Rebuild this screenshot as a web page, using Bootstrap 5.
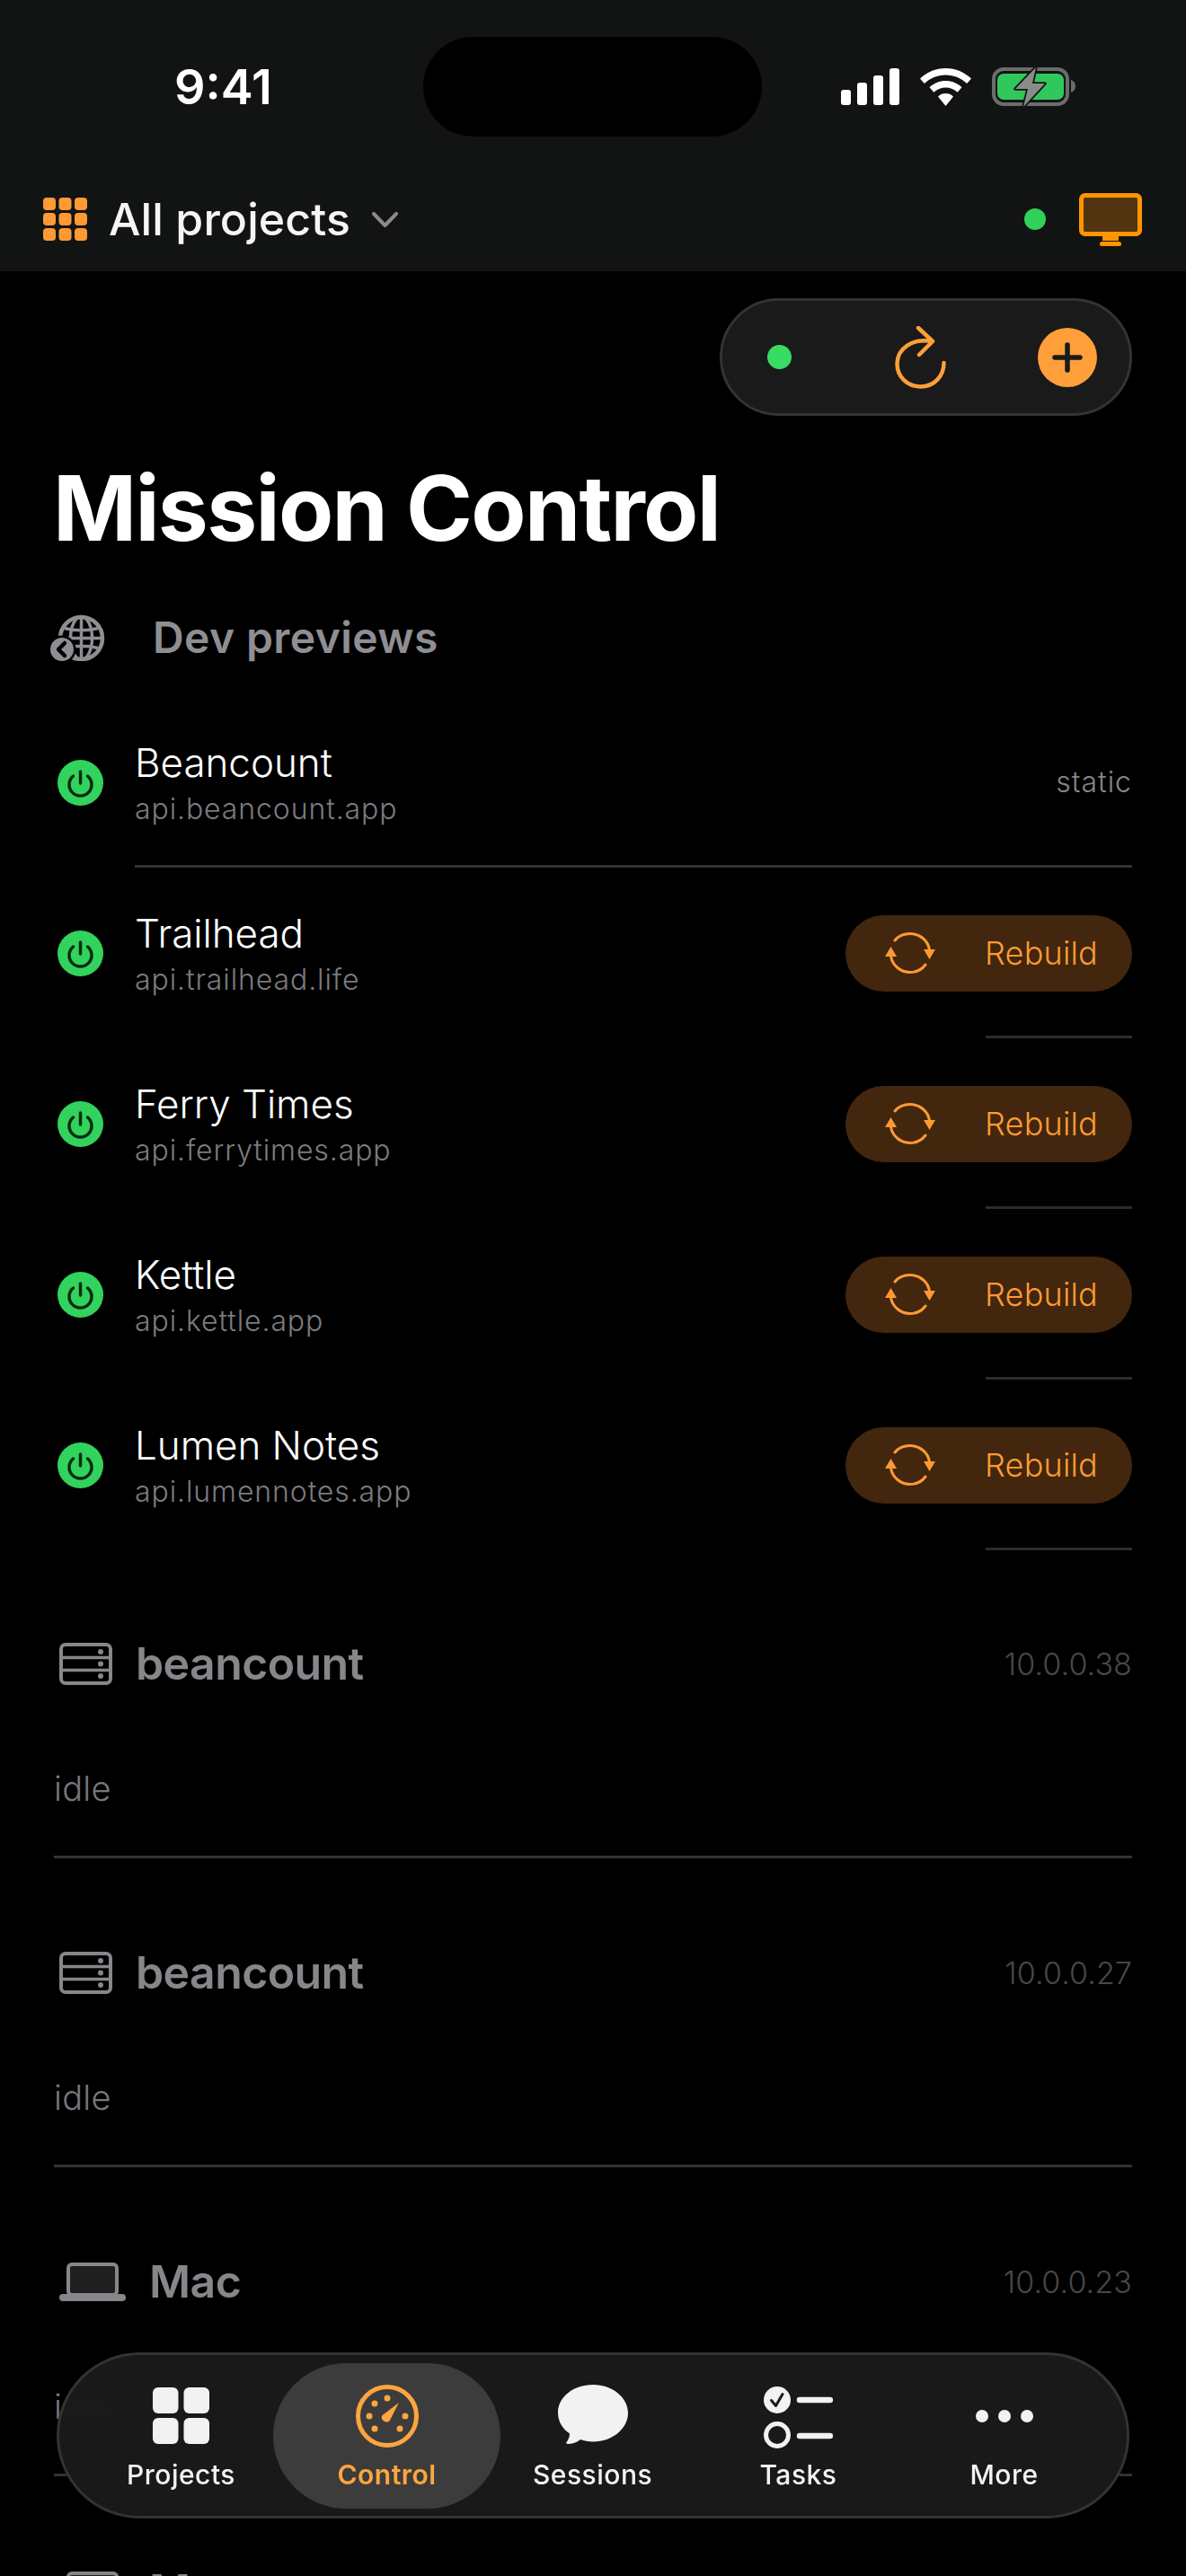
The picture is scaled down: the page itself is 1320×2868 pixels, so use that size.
<!DOCTYPE html>
<html lang="en">
<head>
<meta charset="utf-8">
<title>Mission Control</title>
<link rel="stylesheet" href="https://cdn.jsdelivr.net/npm/bootstrap@5.3.3/dist/css/bootstrap.min.css">
<style>
html, body { height: 2868px; overflow: hidden; background: #000; }
body { font-family: Inter, "Liberation Sans", sans-serif; color: #fff; position: relative; }

.top-bar { background: #121414; height: 302px; }
.status-row { height: 152px; padding-top: 41px; }
.clock-side { width: 471px; padding-left: 26px; font-size: 54px; font-weight: 600; line-height: 111px; text-align: center; }
.notch { width: 377px; height: 111px; background: #000; border-radius: 56px; }
.status-side { padding-left: 88px; gap: 23px; height: 111px; }
.project-row { height: 64px; margin-top: 60px; padding: 0 49px 0 48px; }
.project-name { font-size: 50px; font-weight: 500; margin-left: 24px; color: #f5f5f5; letter-spacing: .1px; }
.project-chevron { margin-left: 24px; }
.live-dot { background: #30d158; border-radius: 50%; }
.live-top { width: 24px; height: 24px; margin-right: 37px; }

.action-pill { width: 459px; height: 131px; margin: 30px 60px 0 auto; padding: 0 36px 0 50px; background: #1a1a1a; border: 3px solid #333; border-radius: 66px; }
.live-action { width: 27px; height: 27px; background: #39dc63; }
.reload-icon { margin-left: 115px; }
.plus-icon { margin-left: 102px; }

.page-title { font-size: 100px; font-weight: 700; line-height: 120px; margin: 43px 0 0 59px; letter-spacing: -1.7px; }
.previews-head { height: 80px; margin: 44px 0 26px 56px; }
.previews-title { font-size: 48px; font-weight: 600; color: #8e8e93; margin-left: 53px; letter-spacing: .4px; }

.preview-row { height: 187px; padding: 3px 60px 0 64px; }
.power-dot { width: 51px; height: 51px; margin-right: 35px; flex: none; }
.preview-text { padding-top: 8px; }
.preview-name { font-size: 44px; line-height: 52px; color: #fff; font-weight: 300; letter-spacing: -.05px; }
.preview-host { font-size: 32px; line-height: 52px; color: #7b7b80; letter-spacing: .9px; font-weight: 300; }
.static-tag { font-size: 32px; color: #87878c; letter-spacing: 1px; font-weight: 300; }
.rebuild-btn { width: 319px; height: 85px; border: 0; border-radius: 43px; background: #42260e; color: #ff9a33; font-size: 36px; font-weight: 300; padding: 0 38px 0 44px; letter-spacing: .2px; }
.rebuild-btn:hover { background: #42260e; color: #ff9a33; }
.rule-line { height: 3px; background: #333; margin-right: 60px; }
.rule-long { margin-left: 150px; }
.rule-short { margin-left: 1097px; background: #2c2c2e; }

.machine { padding: 87px 60px 0; }
.machine-list { margin-top: -1px; }
.machine-head { height: 80px; }
.machine-name { font-size: 50px; font-weight: 600; color: #86868b; margin-left: 26px; letter-spacing: -.6px; }
.machine-icon { margin-left: 6px; }
.machine-ip { font-size: 34px; color: #484848; font-weight: 300; letter-spacing: .1px; }
.machine-state { font-size: 38px; line-height: 60px; color: #77777c; margin-top: 69px; font-weight: 300; letter-spacing: .3px; }
.machine-rule { height: 3px; background: #333; margin-top: 45px; }

.tab-bar { position: absolute; left: 63px; top: 2619px; width: 1194px; height: 185px; padding: 0 21px; background: rgba(27,27,27,.94); backdrop-filter: blur(7px); border: 3px solid #333; border-radius: 93px; }
.tab-item { flex: 0 0 229px; height: 162px; border-radius: 81px; color: #f2f2f2; font-size: 30px; font-weight: 500; line-height: 36px; padding-top: 22px; letter-spacing: .5px; }
.tab-item svg { display: block; height: 74px; margin-bottom: 10px; }
.tab-on { flex-basis: 253px; margin: 0 -12px; background: #3c3c3c; color: #ffa53f; font-weight: 600; }
</style>
</head>
<body>

<div class="top-bar">
    <div class="status-row d-flex">
        <div class="clock-side">9:41</div>
        <div class="notch"></div>
        <div class="status-side d-flex align-items-center">
            <svg width="65" height="41" viewBox="0 0 65 41" fill="#fff"><rect x="0" y="24" width="11" height="17" rx="3"/><rect x="18" y="16" width="11" height="25" rx="3"/><rect x="36" y="8" width="11" height="33" rx="3"/><rect x="54" y="0" width="11" height="41" rx="3"/></svg>
            <svg width="57" height="42" viewBox="0 0 57 42" fill="#fff"><path d="M28.500 0C17.500 0 7.500 4.300 0 11.500L4.800 17C11 11 19.300 7.400 28.500 7.400S46 11 52.200 17L57 11.500C49.500 4.300 39.500 0 28.500 0Z"/><path d="M28.500 14C21.500 14 15.200 16.700 10.500 21.200L15.400 26.700C18.800 23.500 23.400 21.500 28.500 21.500S38.200 23.500 41.600 26.700L46.500 21.200C41.800 16.700 35.500 14 28.500 14Z"/><path d="M28.500 28C25.200 28 22.200 29.200 20 31.400L28.500 42L37 31.400C34.800 29.200 31.800 28 28.500 28Z"/></svg>
            <svg width="93" height="44" viewBox="0 0 93 44"><rect x="2" y="2" width="82" height="39" rx="11" fill="none" stroke="#6b6d6c" stroke-width="4"/><rect x="6" y="7" width="74" height="29" rx="7" fill="#30c85a"/><path d="M88 14c3 .8 5 3.500 5 7s-2 6.200-5 7z" fill="#6b6d6c"/><path d="M49 0L26 24h14l-5 20 24-26H45z" fill="#8a8c8b" stroke="#121414" stroke-width="3.500" stroke-linejoin="round" paint-order="stroke"/></svg>
        </div>
    </div>
    <div class="project-row d-flex align-items-center">
        <svg width="49" height="48" viewBox="0 0 49 48" fill="#ff9a33">
            <rect x="0" y="0" width="14" height="14" rx="4"/><rect x="17.500" y="0" width="14" height="14" rx="4"/><rect x="35" y="0" width="14" height="14" rx="4"/>
            <rect x="0" y="17" width="14" height="14" rx="4"/><rect x="17.500" y="17" width="14" height="14" rx="4"/><rect x="35" y="17" width="14" height="14" rx="4"/>
            <rect x="0" y="34" width="14" height="14" rx="4"/><rect x="17.500" y="34" width="14" height="14" rx="4"/><rect x="35" y="34" width="14" height="14" rx="4"/>
        </svg>
        <span class="project-name">All projects</span>
        <svg class="project-chevron" width="29" height="17" viewBox="0 0 29 17" fill="none" stroke="#8a8a8a" stroke-width="4" stroke-linecap="round" stroke-linejoin="round"><path d="M2 2l12.500 13L27 2"/></svg>
        <span class="live-dot live-top ms-auto"></span>
        <svg width="70" height="59" viewBox="0 0 70 59"><rect x="2.500" y="2.500" width="65" height="43" rx="4" fill="#523410" stroke="#ff9500" stroke-width="5"/><path d="M26 47h18v6H26z" fill="#ff9500"/><rect x="23" y="54" width="24" height="5" rx="2.500" fill="#ff9500"/></svg>
    </div>
</div>

<div class="action-pill d-flex align-items-center">
    <span class="live-dot live-action"></span>
    <svg class="reload-icon" width="57" height="70" viewBox="0 0 57 70" fill="none" stroke="#ff9f3a" stroke-width="4.500" stroke-linecap="round" stroke-linejoin="round"><path d="M41 17C20 13 2.500 25 2.500 42c0 14 11 25.500 26 25.500S54.500 56 54.500 41"/><path d="M26 2l16 15-15 15"/></svg>
    <svg class="plus-icon" width="66" height="66" viewBox="0 0 66 66"><circle cx="33" cy="33" r="33" fill="#ff9f3a"/><path d="M33 19v28M19 33h28" stroke="#1a1a1a" stroke-width="5.500" stroke-linecap="round"/></svg>
</div>

<h1 class="page-title">Mission Control</h1>

<div class="previews-head d-flex align-items-center">
    <svg width="61" height="52" viewBox="0 0 61 52" fill="none">
        <g stroke="#8e8e93"><circle cx="34.500" cy="26.500" r="23.500" stroke-width="4.500"/><ellipse cx="34.500" cy="26.500" rx="12" ry="24" stroke-width="3.500"/><path d="M34.500 3v47M11 26.500h47M16 15.500c11 3 26 3 37 0M16 37.500c11-3 26-3 37 0" stroke-width="3.500"/></g>
        <circle cx="13" cy="39" r="15.500" fill="#000"/><circle cx="13" cy="39" r="13" fill="#8e8e93"/><path d="M16 32l-7 7 7 7" fill="none" stroke="#000" stroke-width="4.500" stroke-linecap="round" stroke-linejoin="round"/>
    </svg>
    <span class="previews-title">Dev previews</span>
</div>

<div class="preview-list">
    <div class="preview-row d-flex align-items-center">
        <svg class="power-dot" viewBox="0 0 51 51"><circle cx="25.500" cy="25.500" r="25.500" fill="#32d35c"/><path d="M25.500 13v13M17.500 18a12.500 12.500 0 1 0 16 0" fill="none" stroke="#0a2a12" stroke-width="3.500" stroke-linecap="round"/></svg>
        <div class="preview-text"><div class="preview-name">Beancount</div><div class="preview-host">api.beancount.app</div></div>
        <span class="static-tag ms-auto">static</span>
    </div>
    <div class="rule-line rule-long"></div>
    <div class="preview-row d-flex align-items-center">
        <svg class="power-dot" viewBox="0 0 51 51"><circle cx="25.500" cy="25.500" r="25.500" fill="#32d35c"/><path d="M25.500 13v13M17.500 18a12.500 12.500 0 1 0 16 0" fill="none" stroke="#0a2a12" stroke-width="3.500" stroke-linecap="round"/></svg>
        <div class="preview-text"><div class="preview-name">Trailhead</div><div class="preview-host">api.trailhead.life</div></div>
        <button class="btn rebuild-btn ms-auto d-flex align-items-center justify-content-between"><svg width="56" height="46" viewBox="0 0 56 46" fill="none"><g stroke="#ff9a33" stroke-width="3" stroke-linecap="round"><path d="M11 9C15 4 21 1.500 28 1.500c11 0 20 8 21.500 18"/><path d="M45 36C41 41.500 35 44.500 28 44.500c-11 0-20-8-21.500-18"/></g><path d="M43 19h13l-6.500 11zM0 27h13L6.500 16z" fill="#ff9a33"/></svg><span>Rebuild</span></button>
    </div>
    <div class="rule-line rule-short"></div>
    <div class="preview-row d-flex align-items-center">
        <svg class="power-dot" viewBox="0 0 51 51"><circle cx="25.500" cy="25.500" r="25.500" fill="#32d35c"/><path d="M25.500 13v13M17.500 18a12.500 12.500 0 1 0 16 0" fill="none" stroke="#0a2a12" stroke-width="3.500" stroke-linecap="round"/></svg>
        <div class="preview-text"><div class="preview-name">Ferry Times</div><div class="preview-host">api.ferrytimes.app</div></div>
        <button class="btn rebuild-btn ms-auto d-flex align-items-center justify-content-between"><svg width="56" height="46" viewBox="0 0 56 46" fill="none"><g stroke="#ff9a33" stroke-width="3" stroke-linecap="round"><path d="M11 9C15 4 21 1.500 28 1.500c11 0 20 8 21.500 18"/><path d="M45 36C41 41.500 35 44.500 28 44.500c-11 0-20-8-21.500-18"/></g><path d="M43 19h13l-6.500 11zM0 27h13L6.500 16z" fill="#ff9a33"/></svg><span>Rebuild</span></button>
    </div>
    <div class="rule-line rule-short"></div>
    <div class="preview-row d-flex align-items-center">
        <svg class="power-dot" viewBox="0 0 51 51"><circle cx="25.500" cy="25.500" r="25.500" fill="#32d35c"/><path d="M25.500 13v13M17.500 18a12.500 12.500 0 1 0 16 0" fill="none" stroke="#0a2a12" stroke-width="3.500" stroke-linecap="round"/></svg>
        <div class="preview-text"><div class="preview-name">Kettle</div><div class="preview-host">api.kettle.app</div></div>
        <button class="btn rebuild-btn ms-auto d-flex align-items-center justify-content-between"><svg width="56" height="46" viewBox="0 0 56 46" fill="none"><g stroke="#ff9a33" stroke-width="3" stroke-linecap="round"><path d="M11 9C15 4 21 1.500 28 1.500c11 0 20 8 21.500 18"/><path d="M45 36C41 41.500 35 44.500 28 44.500c-11 0-20-8-21.500-18"/></g><path d="M43 19h13l-6.500 11zM0 27h13L6.500 16z" fill="#ff9a33"/></svg><span>Rebuild</span></button>
    </div>
    <div class="rule-line rule-short"></div>
    <div class="preview-row d-flex align-items-center">
        <svg class="power-dot" viewBox="0 0 51 51"><circle cx="25.500" cy="25.500" r="25.500" fill="#32d35c"/><path d="M25.500 13v13M17.500 18a12.500 12.500 0 1 0 16 0" fill="none" stroke="#0a2a12" stroke-width="3.500" stroke-linecap="round"/></svg>
        <div class="preview-text"><div class="preview-name">Lumen Notes</div><div class="preview-host">api.lumennotes.app</div></div>
        <button class="btn rebuild-btn ms-auto d-flex align-items-center justify-content-between"><svg width="56" height="46" viewBox="0 0 56 46" fill="none"><g stroke="#ff9a33" stroke-width="3" stroke-linecap="round"><path d="M11 9C15 4 21 1.500 28 1.500c11 0 20 8 21.500 18"/><path d="M45 36C41 41.500 35 44.500 28 44.500c-11 0-20-8-21.500-18"/></g><path d="M43 19h13l-6.500 11zM0 27h13L6.500 16z" fill="#ff9a33"/></svg><span>Rebuild</span></button>
    </div>
    <div class="rule-line rule-short"></div>
</div>

<div class="machine-list">
    <div class="machine">
        <div class="machine-head d-flex align-items-center">
            <svg class="machine-icon" width="59" height="47" viewBox="0 0 59 47" fill="none"><rect x="2" y="2" width="55" height="43" rx="5" stroke="#86868b" stroke-width="4"/><path d="M2 16.500h55M2 30.500h55" stroke="#86868b" stroke-width="3.500"/><g fill="#86868b"><circle cx="46" cy="10" r="3"/><circle cx="46" cy="23.500" r="3"/><circle cx="46" cy="37" r="3"/></g></svg>
            <span class="machine-name">beancount</span>
            <span class="machine-ip ms-auto">10.0.0.38</span>
        </div>
        <div class="machine-state">idle</div>
        <div class="machine-rule"></div>
    </div>
    <div class="machine">
        <div class="machine-head d-flex align-items-center">
            <svg class="machine-icon" width="59" height="47" viewBox="0 0 59 47" fill="none"><rect x="2" y="2" width="55" height="43" rx="5" stroke="#86868b" stroke-width="4"/><path d="M2 16.500h55M2 30.500h55" stroke="#86868b" stroke-width="3.500"/><g fill="#86868b"><circle cx="46" cy="10" r="3"/><circle cx="46" cy="23.500" r="3"/><circle cx="46" cy="37" r="3"/></g></svg>
            <span class="machine-name">beancount</span>
            <span class="machine-ip ms-auto">10.0.0.27</span>
        </div>
        <div class="machine-state">idle</div>
        <div class="machine-rule"></div>
    </div>
    <div class="machine">
        <div class="machine-head d-flex align-items-center">
            <svg class="machine-icon" width="74" height="43" viewBox="0 0 74 43"><rect x="10" y="2" width="54" height="34" rx="4" fill="#1f1f20" stroke="#86868b" stroke-width="4"/><rect x="0" y="35" width="74" height="8" rx="4" fill="#86868b"/></svg>
            <span class="machine-name">Mac</span>
            <span class="machine-ip ms-auto">10.0.0.23</span>
        </div>
        <div class="machine-state">idle</div>
        <div class="machine-rule"></div>
    </div>
    <div class="machine">
        <div class="machine-head d-flex align-items-center">
            <svg class="machine-icon" width="74" height="43" viewBox="0 0 74 43"><rect x="10" y="2" width="54" height="34" rx="4" fill="#1f1f20" stroke="#86868b" stroke-width="4"/><rect x="0" y="35" width="74" height="8" rx="4" fill="#86868b"/></svg>
            <span class="machine-name">Mac</span>
        </div>
    </div>
</div>

<nav class="tab-bar d-flex align-items-center">
    <a class="tab-item text-center text-decoration-none d-flex flex-column align-items-center">
        <svg width="63" viewBox="0 0 63 74" fill="#f2f2f2"><rect x="0" y="5" width="28.500" height="29" rx="6"/><rect x="34.500" y="5" width="28.500" height="29" rx="6"/><rect x="0" y="39" width="28.500" height="29" rx="6"/><rect x="34.500" y="39" width="28.500" height="29" rx="6"/></svg>
        Projects
    </a>
    <a class="tab-item tab-on text-center text-decoration-none d-flex flex-column align-items-center">
        <svg width="70" viewBox="0 0 70 74"><circle cx="35" cy="37" r="32.500" fill="none" stroke="#ffa53f" stroke-width="5"/><g fill="#ffa53f"><circle cx="35" cy="17" r="3.500"/><circle cx="21" cy="23" r="3.500"/><circle cx="15" cy="37" r="3.500"/><circle cx="21" cy="51" r="3.500"/><circle cx="49" cy="51" r="3.500"/><circle cx="55" cy="37" r="3.500"/><path d="M48 22L37.500 42.500a5.500 5.500 0 0 1-8.500-6z"/></g></svg>
        Control
    </a>
    <a class="tab-item text-center text-decoration-none d-flex flex-column align-items-center">
        <svg width="80" viewBox="0 0 80 74" fill="#f2f2f2"><path d="M40 2C18 2 1 16 1 33c0 10 5 18 13 23.500c0 4-1.500 7-3.500 9.500-.8 1 .2 2 1.500 2 5 0 10-1.500 14-5 4 1.500 9 2.500 14 2.500 22 0 39-15 39-32S62 2 40 2Z"/></svg>
        Sessions
    </a>
    <a class="tab-item text-center text-decoration-none d-flex flex-column align-items-center">
        <svg width="77" viewBox="0 0 77 74"><circle cx="15" cy="19" r="15" fill="#f2f2f2"/><path d="M8.500 19.500l5 6 7.500-13" fill="none" stroke="#1b1b1b" stroke-width="3" stroke-linecap="round" stroke-linejoin="round"/><circle cx="15" cy="58" r="12.500" fill="none" stroke="#f2f2f2" stroke-width="5"/><path d="M40 19h34M40 59h34" stroke="#f2f2f2" stroke-width="6.500" stroke-linecap="round"/></svg>
        Tasks
    </a>
    <a class="tab-item text-center text-decoration-none d-flex flex-column align-items-center">
        <svg width="64" viewBox="0 0 64 74" fill="#f2f2f2"><circle cx="7" cy="37" r="7"/><circle cx="32" cy="37" r="7"/><circle cx="57" cy="37" r="7"/></svg>
        More
    </a>
</nav>

<script src="https://cdn.jsdelivr.net/npm/bootstrap@5.3.3/dist/js/bootstrap.bundle.min.js"></script>
</body>
</html>
